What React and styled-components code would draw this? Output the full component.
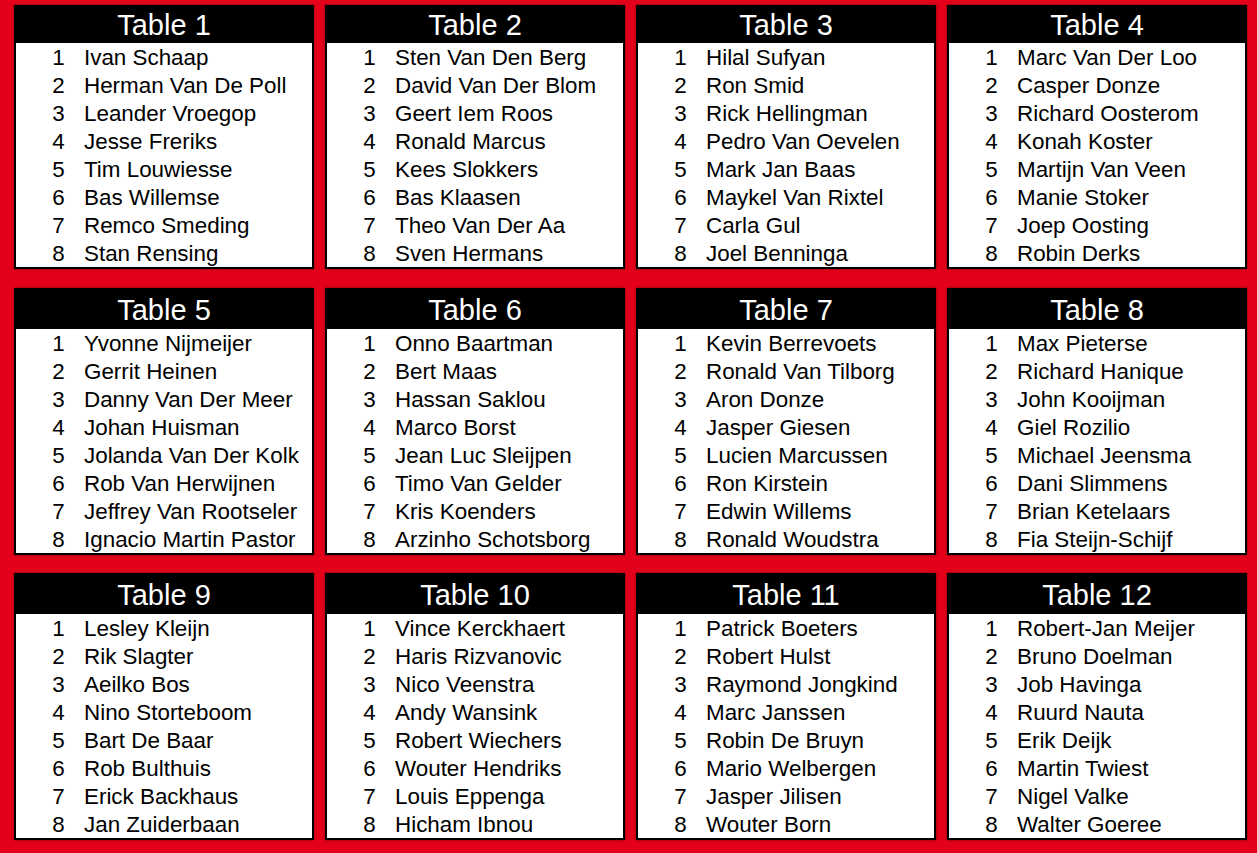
import React from "react";
import styled, { createGlobalStyle } from "styled-components";

const Global = createGlobalStyle`
  html, body { margin: 0; padding: 0; background: #e2001a; }
  body { font-family: "Liberation Sans", Arial, sans-serif; }
`;

const tables = [
  ["Ivan Schaap", "Herman Van De Poll", "Leander Vroegop", "Jesse Freriks", "Tim Louwiesse", "Bas Willemse", "Remco Smeding", "Stan Rensing"],
  ["Sten Van Den Berg", "David Van Der Blom", "Geert Iem Roos", "Ronald Marcus", "Kees Slokkers", "Bas Klaasen", "Theo Van Der Aa", "Sven Hermans"],
  ["Hilal Sufyan", "Ron Smid", "Rick Hellingman", "Pedro Van Oevelen", "Mark Jan Baas", "Maykel Van Rixtel", "Carla Gul", "Joel Benninga"],
  ["Marc Van Der Loo", "Casper Donze", "Richard Oosterom", "Konah Koster", "Martijn Van Veen", "Manie Stoker", "Joep Oosting", "Robin Derks"],
  ["Yvonne Nijmeijer", "Gerrit Heinen", "Danny Van Der Meer", "Johan Huisman", "Jolanda Van Der Kolk", "Rob Van Herwijnen", "Jeffrey Van Rootseler", "Ignacio Martin Pastor"],
  ["Onno Baartman", "Bert Maas", "Hassan Saklou", "Marco Borst", "Jean Luc Sleijpen", "Timo Van Gelder", "Kris Koenders", "Arzinho Schotsborg"],
  ["Kevin Berrevoets", "Ronald Van Tilborg", "Aron Donze", "Jasper Giesen", "Lucien Marcussen", "Ron Kirstein", "Edwin Willems", "Ronald Woudstra"],
  ["Max Pieterse", "Richard Hanique", "John Kooijman", "Giel Rozilio", "Michael Jeensma", "Dani Slimmens", "Brian Ketelaars", "Fia Steijn-Schijf"],
  ["Lesley Kleijn", "Rik Slagter", "Aeilko Bos", "Nino Storteboom", "Bart De Baar", "Rob Bulthuis", "Erick Backhaus", "Jan Zuiderbaan"],
  ["Vince Kerckhaert", "Haris Rizvanovic", "Nico Veenstra", "Andy Wansink", "Robert Wiechers", "Wouter Hendriks", "Louis Eppenga", "Hicham Ibnou"],
  ["Patrick Boeters", "Robert Hulst", "Raymond Jongkind", "Marc Janssen", "Robin De Bruyn", "Mario Welbergen", "Jasper Jilisen", "Wouter Born"],
  ["Robert-Jan Meijer", "Bruno Doelman", "Job Havinga", "Ruurd Nauta", "Erik Deijk", "Martin Twiest", "Nigel Valke", "Walter Goeree"],
];

const Page = styled.div`
  width: 1257px;
  height: 853px;
  box-sizing: border-box;
  padding: 5px 10px 0 14px;
  display: grid;
  grid-template-columns: repeat(4, 300px);
  grid-template-rows: 265px 267px 267px;
  column-gap: 11px;
  row-gap: 18px;
  background: #e2001a;
  overflow: hidden;
`;

const Card = styled.section`
  display: flex;
  flex-direction: column;
  align-self: start;
  box-shadow: 0 0 2px rgba(60, 0, 0, 0.7);
`;

const Header = styled.div`
  height: ${(p) => (p.$tall ? 41 : 38)}px;
  box-sizing: border-box;
  padding-top: ${(p) => (p.$tall ? 4 : 2)}px;
  background: #000;
  color: #fff;
  font-size: 29px;
  line-height: 36px;
  text-align: center;
`;

const Body = styled.ol`
  list-style: none;
  margin: 0;
  padding: 0;
  background: #fff;
  border: 2px solid #000;
  border-top: none;
`;

const Row = styled.li`
  height: 28px;
  box-sizing: border-box;
  padding-top: 2px;
  display: flex;
  align-items: center;
  padding-left: 30px;
  font-size: 22.4px;
  color: #000;
  white-space: nowrap;
`;

const Num = styled.span`
  width: 25px;
  text-align: center;
  margin-right: 13px;
`;

export default function App() {
  return (
    <>
      <Global />
      <Page>
        {tables.map((names, i) => (
          <Card key={i}>
            <Header $tall={i >= 4}>Table {i + 1}</Header>
            <Body>
              {names.map((n, j) => (
                <Row key={j}>
                  <Num>{j + 1}</Num>
                  {n}
                </Row>
              ))}
            </Body>
          </Card>
        ))}
      </Page>
    </>
  );
}
